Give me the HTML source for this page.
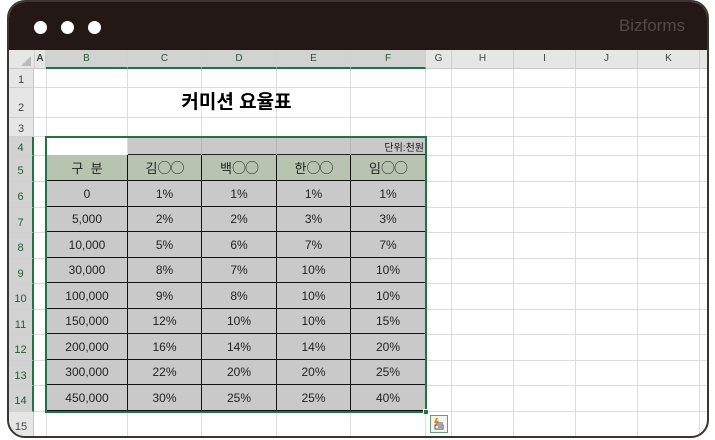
<!DOCTYPE html><html><head><meta charset="utf-8"><style>
*{margin:0;padding:0;box-sizing:border-box}
body{width:715px;height:440px;background:#fff;position:relative;overflow:hidden;font-family:"Liberation Sans","Noto Sans CJK KR",sans-serif}
.frame{position:absolute;left:7px;top:0px;width:702px;height:438px;border:2px solid #3b3431;border-radius:18px;overflow:hidden;background:#fff}
.top{position:absolute;left:0;top:0;width:100%;height:48px;background:#231815}
.dot{position:absolute;top:19px;width:13px;height:13px;border-radius:50%;background:#fff}
.brand{position:absolute;right:22px;top:14px;color:#524a47;font-size:17px}
.a{position:absolute}
.ch{position:absolute;top:48px;height:19px;background:#e6e6e6;border-right:1px solid #d0d0d0;border-bottom:1px solid #c8c8c8;font-size:10px;color:#444;text-align:center;line-height:18px}
.ch.s{background:#d2d2d2;color:#225a35;border-bottom:2px solid #217346}
.rh{position:absolute;left:0;width:25px;background:#e6e6e6;border-bottom:1px solid #d0d0d0;border-right:1px solid #c8c8c8;font-size:11px;color:#444;text-align:center}
.rh.s{background:#d2d2d2;color:#225a35;border-right:2px solid #217346}
.vl{position:absolute;top:67px;bottom:0;width:1px;background:#dcdcdc}
.hl{position:absolute;left:25px;right:0;height:1px;background:#dcdcdc}
.c{position:absolute;background:#c9c9c9;border-right:1px solid #111;border-bottom:1px solid #111;text-align:center;font-size:12px;color:#222;display:flex;align-items:center;justify-content:center}
.h{background:#b8c3b0;font-size:13px}
.o{font-family:"Noto Sans CJK KR",sans-serif;font-size:14px;letter-spacing:-1px}
</style></head><body>
<div class="frame">
<div class="top"><div class="dot" style="left:25px"></div><div class="dot" style="left:52px"></div><div class="dot" style="left:79px"></div><div class="brand">Bizforms</div></div>
<div class="vl" style="left:118px"></div><div class="vl" style="left:192px"></div><div class="vl" style="left:267px"></div><div class="vl" style="left:341px"></div><div class="vl" style="left:416px"></div><div class="vl" style="left:442px"></div><div class="vl" style="left:504px"></div><div class="vl" style="left:566px"></div><div class="vl" style="left:628px"></div><div class="vl" style="left:690px"></div><div class="vl" style="left:37px"></div>
<div class="hl" style="top:85px"></div><div class="hl" style="top:115px"></div><div class="hl" style="top:134px"></div><div class="hl" style="top:153px"></div><div class="hl" style="top:179px"></div><div class="hl" style="top:205px"></div><div class="hl" style="top:230px"></div><div class="hl" style="top:256px"></div><div class="hl" style="top:281px"></div><div class="hl" style="top:307px"></div><div class="hl" style="top:332px"></div><div class="hl" style="top:358px"></div><div class="hl" style="top:383px"></div><div class="hl" style="top:409px"></div>
<div class="ch" style="left:0;width:26px"><span style="position:absolute;right:3px;bottom:2px;width:0;height:0;border-left:10px solid transparent;border-bottom:10px solid #bbb"></span></div>
<div class="ch" style="left:26px;width:11px;font-weight:bold">A</div>
<div class="ch s" style="left:37px;width:82px">B</div>
<div class="ch s" style="left:119px;width:74px">C</div>
<div class="ch s" style="left:193px;width:75px">D</div>
<div class="ch s" style="left:268px;width:74px">E</div>
<div class="ch s" style="left:342px;width:75px">F</div>
<div class="ch" style="left:417px;width:26px">G</div>
<div class="ch" style="left:443px;width:62px">H</div>
<div class="ch" style="left:505px;width:62px">I</div>
<div class="ch" style="left:567px;width:62px">J</div>
<div class="ch" style="left:629px;width:62px">K</div>
<div class="ch" style="left:691px;width:20px"></div>
<div class="rh" style="top:67px;height:19px;line-height:22px">1</div>
<div class="rh" style="top:86px;height:30px;line-height:40px">2</div>
<div class="rh" style="top:116px;height:19px;line-height:22px">3</div>
<div class="rh s" style="top:135px;height:19px;line-height:22px">4</div>
<div class="rh s" style="top:154px;height:26px;line-height:30px">5</div>
<div class="rh s" style="top:180px;height:26px;line-height:30px">6</div>
<div class="rh s" style="top:206px;height:25px;line-height:30px">7</div>
<div class="rh s" style="top:231px;height:26px;line-height:30px">8</div>
<div class="rh s" style="top:257px;height:25px;line-height:30px">9</div>
<div class="rh s" style="top:282px;height:26px;line-height:30px">10</div>
<div class="rh s" style="top:308px;height:25px;line-height:30px">11</div>
<div class="rh s" style="top:333px;height:26px;line-height:30px">12</div>
<div class="rh s" style="top:359px;height:25px;line-height:30px">13</div>
<div class="rh s" style="top:384px;height:26px;line-height:30px">14</div>
<div class="rh" style="top:410px;height:30px;line-height:30px">15</div>
<div class="a" style="left:38px;top:86px;width:379px;height:30px;text-align:center;font-size:19px;font-weight:bold;line-height:30px;color:#000">커미션 요율표</div>
<div class="a" style="left:119px;top:135px;width:298px;height:19px;background:#c9c9c9;border-bottom:2px solid #222"></div>
<div class="a" style="left:192px;top:135px;width:1px;height:19px;background:#b5b5b5"></div><div class="a" style="left:267px;top:135px;width:1px;height:19px;background:#b5b5b5"></div><div class="a" style="left:341px;top:135px;width:1px;height:19px;background:#b5b5b5"></div>
<div class="a" style="left:342px;top:137px;width:73px;text-align:right;font-size:10px;color:#111">단위:천원</div>
<div class="a" style="left:37px;top:153px;width:380px;height:257px;border-left:1px solid #111">
<div class="c h" style="left:0;top:0;width:81px;height:26px">구 &nbsp;분</div><div class="c h" style="left:81px;top:0;width:74px;height:26px">김<span class="o">○○</span></div><div class="c h" style="left:155px;top:0;width:75px;height:26px">백<span class="o">○○</span></div><div class="c h" style="left:230px;top:0;width:74px;height:26px">한<span class="o">○○</span></div><div class="c h" style="left:304px;top:0;width:75px;height:26px">임<span class="o">○○</span></div>
<div class="c" style="left:0;top:26px;width:81px;height:26px">0</div><div class="c" style="left:81px;top:26px;width:74px;height:26px">1%</div><div class="c" style="left:155px;top:26px;width:75px;height:26px">1%</div><div class="c" style="left:230px;top:26px;width:74px;height:26px">1%</div><div class="c" style="left:304px;top:26px;width:75px;height:26px">1%</div>
<div class="c" style="left:0;top:52px;width:81px;height:25px">5,000</div><div class="c" style="left:81px;top:52px;width:74px;height:25px">2%</div><div class="c" style="left:155px;top:52px;width:75px;height:25px">2%</div><div class="c" style="left:230px;top:52px;width:74px;height:25px">3%</div><div class="c" style="left:304px;top:52px;width:75px;height:25px">3%</div>
<div class="c" style="left:0;top:77px;width:81px;height:26px">10,000</div><div class="c" style="left:81px;top:77px;width:74px;height:26px">5%</div><div class="c" style="left:155px;top:77px;width:75px;height:26px">6%</div><div class="c" style="left:230px;top:77px;width:74px;height:26px">7%</div><div class="c" style="left:304px;top:77px;width:75px;height:26px">7%</div>
<div class="c" style="left:0;top:103px;width:81px;height:25px">30,000</div><div class="c" style="left:81px;top:103px;width:74px;height:25px">8%</div><div class="c" style="left:155px;top:103px;width:75px;height:25px">7%</div><div class="c" style="left:230px;top:103px;width:74px;height:25px">10%</div><div class="c" style="left:304px;top:103px;width:75px;height:25px">10%</div>
<div class="c" style="left:0;top:128px;width:81px;height:26px">100,000</div><div class="c" style="left:81px;top:128px;width:74px;height:26px">9%</div><div class="c" style="left:155px;top:128px;width:75px;height:26px">8%</div><div class="c" style="left:230px;top:128px;width:74px;height:26px">10%</div><div class="c" style="left:304px;top:128px;width:75px;height:26px">10%</div>
<div class="c" style="left:0;top:154px;width:81px;height:25px">150,000</div><div class="c" style="left:81px;top:154px;width:74px;height:25px">12%</div><div class="c" style="left:155px;top:154px;width:75px;height:25px">10%</div><div class="c" style="left:230px;top:154px;width:74px;height:25px">10%</div><div class="c" style="left:304px;top:154px;width:75px;height:25px">15%</div>
<div class="c" style="left:0;top:179px;width:81px;height:26px">200,000</div><div class="c" style="left:81px;top:179px;width:74px;height:26px">16%</div><div class="c" style="left:155px;top:179px;width:75px;height:26px">14%</div><div class="c" style="left:230px;top:179px;width:74px;height:26px">14%</div><div class="c" style="left:304px;top:179px;width:75px;height:26px">20%</div>
<div class="c" style="left:0;top:205px;width:81px;height:25px">300,000</div><div class="c" style="left:81px;top:205px;width:74px;height:25px">22%</div><div class="c" style="left:155px;top:205px;width:75px;height:25px">20%</div><div class="c" style="left:230px;top:205px;width:74px;height:25px">20%</div><div class="c" style="left:304px;top:205px;width:75px;height:25px">25%</div>
<div class="c" style="left:0;top:230px;width:81px;height:26px">450,000</div><div class="c" style="left:81px;top:230px;width:74px;height:26px">30%</div><div class="c" style="left:155px;top:230px;width:75px;height:26px">25%</div><div class="c" style="left:230px;top:230px;width:74px;height:26px">25%</div><div class="c" style="left:304px;top:230px;width:75px;height:26px">40%</div>
</div>
<div class="a" style="left:36px;top:134px;width:382px;height:277px;border:2px solid #217346"></div>
<div class="a" style="left:414px;top:407px;width:6px;height:6px;background:#217346;border:1px solid #fff"></div>
<div class="a" style="left:421px;top:413px;width:18px;height:18px;border:1px solid #6a9a78;background:#f4f4f4">
<svg width="16" height="16" viewBox="0 0 16 16"><path d="M5 2 L3 7 L5 7 L4 11 L8 5 L6 5 L7 2Z" fill="#e88a1a"/><path d="M4 9 H12 V13 H4 Z M6 7 H12 M7 11 H11" fill="none" stroke="#555" stroke-width="1"/></svg></div>
</div>
</body></html>
